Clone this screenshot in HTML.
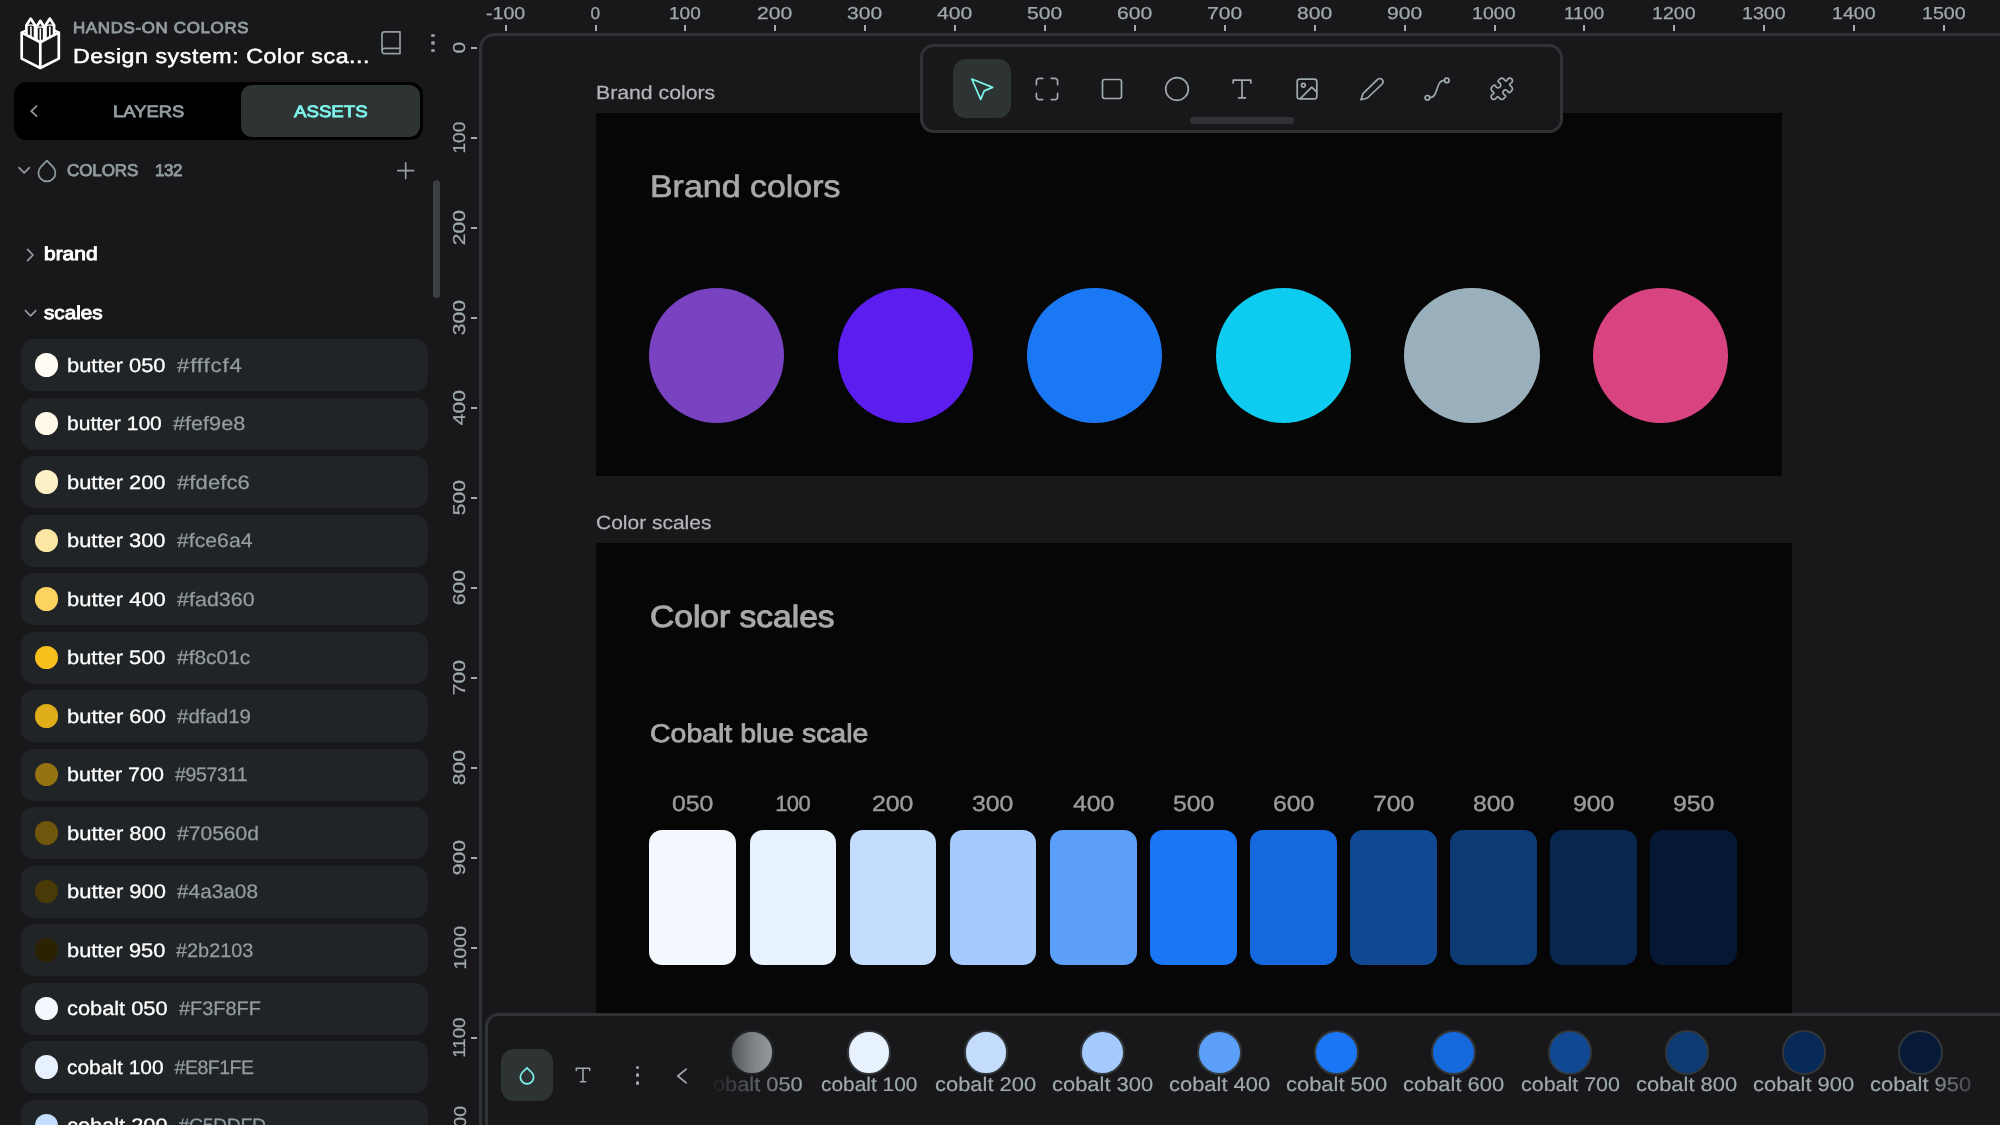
<!DOCTYPE html>
<html><head><meta charset="utf-8"><title>Penpot - Design system: Color scales</title>
<style>
html,body{margin:0;padding:0;}
body{width:2000px;height:1125px;overflow:hidden;background:#18181a;position:relative;font-family:"Liberation Sans",sans-serif;}
#app{position:absolute;left:0;top:0;width:2000px;height:1125px;overflow:hidden;will-change:transform;}
.b{position:absolute;display:block;}
.t{position:absolute;display:block;white-space:nowrap;line-height:1;text-rendering:geometricPrecision;transform-origin:0 50%;font-family:"Liberation Sans",sans-serif;}
</style></head><body><div id="app">
<div class="b" style="left:479.4px;top:33.1px;width:1600px;height:1200px;border:3.5px solid #2f3336;border-radius:15.5px;background:#18181a;"></div>
<div class="b" style="left:595.60px;top:113.20px;width:1186.40px;height:363.30px;background:#060606;"></div>
<div class="b" style="left:595.60px;top:543.00px;width:1196.00px;height:600.00px;background:#060606;"></div>
<span class="t" style="left:595.70px;top:84.42px;font-size:19px;color:#b4b6b9;transform:scaleX(1.1175);-webkit-text-stroke:0.25px #b4b6b9;">Brand colors</span>
<span class="t" style="left:595.70px;top:514.42px;font-size:19px;color:#b4b6b9;transform:scaleX(1.1039);-webkit-text-stroke:0.25px #b4b6b9;">Color scales</span>
<span class="t" style="left:650.30px;top:171.26px;font-size:31.0px;color:#a9a9a9;transform:scaleX(1.0941);-webkit-text-stroke:0.65px #a9a9a9;">Brand colors</span>
<span class="t" style="left:650.30px;top:602.10px;font-size:30.6px;color:#a9a9a9;transform:scaleX(1.0965);-webkit-text-stroke:1.0px #a9a9a9;">Color scales</span>
<span class="t" style="left:650.30px;top:721.73px;font-size:25.6px;color:#a9a9a9;transform:scaleX(1.1121);-webkit-text-stroke:0.8px #a9a9a9;">Cobalt blue scale</span>
<div class="b" style="left:649.30px;top:287.50px;width:135.20px;height:135.20px;background:#7842c0;border-radius:70px;"></div>
<div class="b" style="left:838.06px;top:287.50px;width:135.20px;height:135.20px;background:#5b1eee;border-radius:70px;"></div>
<div class="b" style="left:1026.82px;top:287.50px;width:135.20px;height:135.20px;background:#1b78f5;border-radius:70px;"></div>
<div class="b" style="left:1215.58px;top:287.50px;width:135.20px;height:135.20px;background:#0ecbf0;border-radius:70px;"></div>
<div class="b" style="left:1404.34px;top:287.50px;width:135.20px;height:135.20px;background:#9bb0bd;border-radius:70px;"></div>
<div class="b" style="left:1593.10px;top:287.50px;width:135.20px;height:135.20px;background:#d74480;border-radius:70px;"></div>
<div class="b" style="left:649.40px;top:829.60px;width:86.80px;height:135.00px;background:#F3F8FF;border-radius:13px;"></div>
<span class="t" style="left:672.10px;top:793.18px;font-size:22px;color:#9b9b9b;transform:scaleX(1.1279);-webkit-text-stroke:0.4px #9b9b9b;">050</span>
<div class="b" style="left:749.50px;top:829.60px;width:86.80px;height:135.00px;background:#E8F1FE;border-radius:13px;"></div>
<span class="t" style="left:775.15px;top:793.18px;font-size:22px;color:#9b9b9b;letter-spacing:-0.603px;-webkit-text-stroke:0.4px #9b9b9b;">100</span>
<div class="b" style="left:849.60px;top:829.60px;width:86.80px;height:135.00px;background:#C5DDFD;border-radius:13px;"></div>
<span class="t" style="left:872.30px;top:793.18px;font-size:22px;color:#9b9b9b;transform:scaleX(1.1279);-webkit-text-stroke:0.4px #9b9b9b;">200</span>
<div class="b" style="left:949.70px;top:829.60px;width:86.80px;height:135.00px;background:#A4CAFE;border-radius:13px;"></div>
<span class="t" style="left:972.40px;top:793.18px;font-size:22px;color:#9b9b9b;transform:scaleX(1.1279);-webkit-text-stroke:0.4px #9b9b9b;">300</span>
<div class="b" style="left:1049.80px;top:829.60px;width:86.80px;height:135.00px;background:#5B9FF9;border-radius:13px;"></div>
<span class="t" style="left:1072.50px;top:793.18px;font-size:22px;color:#9b9b9b;transform:scaleX(1.1279);-webkit-text-stroke:0.4px #9b9b9b;">400</span>
<div class="b" style="left:1149.90px;top:829.60px;width:86.80px;height:135.00px;background:#1B76F5;border-radius:13px;"></div>
<span class="t" style="left:1172.60px;top:793.18px;font-size:22px;color:#9b9b9b;transform:scaleX(1.1279);-webkit-text-stroke:0.4px #9b9b9b;">500</span>
<div class="b" style="left:1250.00px;top:829.60px;width:86.80px;height:135.00px;background:#1668DD;border-radius:13px;"></div>
<span class="t" style="left:1272.70px;top:793.18px;font-size:22px;color:#9b9b9b;transform:scaleX(1.1279);-webkit-text-stroke:0.4px #9b9b9b;">600</span>
<div class="b" style="left:1350.10px;top:829.60px;width:86.80px;height:135.00px;background:#114894;border-radius:13px;"></div>
<span class="t" style="left:1372.80px;top:793.18px;font-size:22px;color:#9b9b9b;transform:scaleX(1.1279);-webkit-text-stroke:0.4px #9b9b9b;">700</span>
<div class="b" style="left:1450.20px;top:829.60px;width:86.80px;height:135.00px;background:#0E3A74;border-radius:13px;"></div>
<span class="t" style="left:1472.90px;top:793.18px;font-size:22px;color:#9b9b9b;transform:scaleX(1.1279);-webkit-text-stroke:0.4px #9b9b9b;">800</span>
<div class="b" style="left:1550.30px;top:829.60px;width:86.80px;height:135.00px;background:#08274E;border-radius:13px;"></div>
<span class="t" style="left:1573.00px;top:793.18px;font-size:22px;color:#9b9b9b;transform:scaleX(1.1279);-webkit-text-stroke:0.4px #9b9b9b;">900</span>
<div class="b" style="left:1650.40px;top:829.60px;width:86.80px;height:135.00px;background:#051732;border-radius:13px;"></div>
<span class="t" style="left:1673.10px;top:793.18px;font-size:22px;color:#9b9b9b;transform:scaleX(1.1279);-webkit-text-stroke:0.4px #9b9b9b;">950</span>
<div class="b" style="left:504.60px;top:25.00px;width:2.00px;height:6.40px;background:#a3abaf;"></div>
<span class="t" style="left:485.65px;top:5.46px;font-size:17.3px;color:#a0a9ad;transform:scaleX(1.1350);-webkit-text-stroke:0.25px #a0a9ad;">-100</span>
<div class="b" style="left:594.50px;top:25.00px;width:2.00px;height:6.40px;background:#a3abaf;"></div>
<span class="t" style="left:590.39px;top:5.46px;font-size:17.3px;color:#a0a9ad;-webkit-text-stroke:0.25px #a0a9ad;">0</span>
<div class="b" style="left:684.40px;top:25.00px;width:2.00px;height:6.40px;background:#a3abaf;"></div>
<span class="t" style="left:669.20px;top:5.46px;font-size:17.3px;color:#a0a9ad;transform:scaleX(1.1017);-webkit-text-stroke:0.25px #a0a9ad;">100</span>
<div class="b" style="left:774.30px;top:25.00px;width:2.00px;height:6.40px;background:#a3abaf;"></div>
<span class="t" style="left:757.40px;top:5.46px;font-size:17.3px;color:#a0a9ad;transform:scaleX(1.2195);-webkit-text-stroke:0.25px #a0a9ad;">200</span>
<div class="b" style="left:864.20px;top:25.00px;width:2.00px;height:6.40px;background:#a3abaf;"></div>
<span class="t" style="left:847.30px;top:5.46px;font-size:17.3px;color:#a0a9ad;transform:scaleX(1.2195);-webkit-text-stroke:0.25px #a0a9ad;">300</span>
<div class="b" style="left:954.10px;top:25.00px;width:2.00px;height:6.40px;background:#a3abaf;"></div>
<span class="t" style="left:937.20px;top:5.46px;font-size:17.3px;color:#a0a9ad;transform:scaleX(1.2195);-webkit-text-stroke:0.25px #a0a9ad;">400</span>
<div class="b" style="left:1044.00px;top:25.00px;width:2.00px;height:6.40px;background:#a3abaf;"></div>
<span class="t" style="left:1027.10px;top:5.46px;font-size:17.3px;color:#a0a9ad;transform:scaleX(1.2195);-webkit-text-stroke:0.25px #a0a9ad;">500</span>
<div class="b" style="left:1133.90px;top:25.00px;width:2.00px;height:6.40px;background:#a3abaf;"></div>
<span class="t" style="left:1117.00px;top:5.46px;font-size:17.3px;color:#a0a9ad;transform:scaleX(1.2195);-webkit-text-stroke:0.25px #a0a9ad;">600</span>
<div class="b" style="left:1223.80px;top:25.00px;width:2.00px;height:6.40px;background:#a3abaf;"></div>
<span class="t" style="left:1206.90px;top:5.46px;font-size:17.3px;color:#a0a9ad;transform:scaleX(1.2195);-webkit-text-stroke:0.25px #a0a9ad;">700</span>
<div class="b" style="left:1313.70px;top:25.00px;width:2.00px;height:6.40px;background:#a3abaf;"></div>
<span class="t" style="left:1296.80px;top:5.46px;font-size:17.3px;color:#a0a9ad;transform:scaleX(1.2195);-webkit-text-stroke:0.25px #a0a9ad;">800</span>
<div class="b" style="left:1403.60px;top:25.00px;width:2.00px;height:6.40px;background:#a3abaf;"></div>
<span class="t" style="left:1386.70px;top:5.46px;font-size:17.3px;color:#a0a9ad;transform:scaleX(1.2195);-webkit-text-stroke:0.25px #a0a9ad;">900</span>
<div class="b" style="left:1493.50px;top:25.00px;width:2.00px;height:6.40px;background:#a3abaf;"></div>
<span class="t" style="left:1472.40px;top:5.46px;font-size:17.3px;color:#a0a9ad;transform:scaleX(1.1329);-webkit-text-stroke:0.25px #a0a9ad;">1000</span>
<div class="b" style="left:1583.40px;top:25.00px;width:2.00px;height:6.40px;background:#a3abaf;"></div>
<span class="t" style="left:1564.00px;top:5.46px;font-size:17.3px;color:#a0a9ad;transform:scaleX(1.0806);-webkit-text-stroke:0.25px #a0a9ad;">1100</span>
<div class="b" style="left:1673.30px;top:25.00px;width:2.00px;height:6.40px;background:#a3abaf;"></div>
<span class="t" style="left:1652.20px;top:5.46px;font-size:17.3px;color:#a0a9ad;transform:scaleX(1.1329);-webkit-text-stroke:0.25px #a0a9ad;">1200</span>
<div class="b" style="left:1763.20px;top:25.00px;width:2.00px;height:6.40px;background:#a3abaf;"></div>
<span class="t" style="left:1742.10px;top:5.46px;font-size:17.3px;color:#a0a9ad;transform:scaleX(1.1329);-webkit-text-stroke:0.25px #a0a9ad;">1300</span>
<div class="b" style="left:1853.10px;top:25.00px;width:2.00px;height:6.40px;background:#a3abaf;"></div>
<span class="t" style="left:1832.00px;top:5.46px;font-size:17.3px;color:#a0a9ad;transform:scaleX(1.1329);-webkit-text-stroke:0.25px #a0a9ad;">1400</span>
<div class="b" style="left:1943.00px;top:25.00px;width:2.00px;height:6.40px;background:#a3abaf;"></div>
<span class="t" style="left:1921.90px;top:5.46px;font-size:17.3px;color:#a0a9ad;transform:scaleX(1.1329);-webkit-text-stroke:0.25px #a0a9ad;">1500</span>
<div class="b" style="left:471.10px;top:47.40px;width:6.40px;height:1.90px;background:#a3abaf;"></div>
<span class="t" style="left:455.09px;top:39.05px;width:9.62px;font-size:17.3px;color:#a0a9ad;-webkit-text-stroke:0.25px #a0a9ad;transform:rotate(-90deg) scaleX(1.2056);transform-origin:50% 50%;">0</span>
<div class="b" style="left:471.10px;top:137.40px;width:6.40px;height:1.90px;background:#a3abaf;"></div>
<span class="t" style="left:445.47px;top:129.05px;width:28.86px;font-size:17.3px;color:#a0a9ad;-webkit-text-stroke:0.25px #a0a9ad;transform:rotate(-90deg) scaleX(1.1017);transform-origin:50% 50%;">100</span>
<div class="b" style="left:471.10px;top:227.40px;width:6.40px;height:1.90px;background:#a3abaf;"></div>
<span class="t" style="left:445.47px;top:219.05px;width:28.86px;font-size:17.3px;color:#a0a9ad;-webkit-text-stroke:0.25px #a0a9ad;transform:rotate(-90deg) scaleX(1.2195);transform-origin:50% 50%;">200</span>
<div class="b" style="left:471.10px;top:317.40px;width:6.40px;height:1.90px;background:#a3abaf;"></div>
<span class="t" style="left:445.47px;top:309.05px;width:28.86px;font-size:17.3px;color:#a0a9ad;-webkit-text-stroke:0.25px #a0a9ad;transform:rotate(-90deg) scaleX(1.2195);transform-origin:50% 50%;">300</span>
<div class="b" style="left:471.10px;top:407.40px;width:6.40px;height:1.90px;background:#a3abaf;"></div>
<span class="t" style="left:445.47px;top:399.05px;width:28.86px;font-size:17.3px;color:#a0a9ad;-webkit-text-stroke:0.25px #a0a9ad;transform:rotate(-90deg) scaleX(1.2195);transform-origin:50% 50%;">400</span>
<div class="b" style="left:471.10px;top:497.40px;width:6.40px;height:1.90px;background:#a3abaf;"></div>
<span class="t" style="left:445.47px;top:489.05px;width:28.86px;font-size:17.3px;color:#a0a9ad;-webkit-text-stroke:0.25px #a0a9ad;transform:rotate(-90deg) scaleX(1.2195);transform-origin:50% 50%;">500</span>
<div class="b" style="left:471.10px;top:587.40px;width:6.40px;height:1.90px;background:#a3abaf;"></div>
<span class="t" style="left:445.47px;top:579.05px;width:28.86px;font-size:17.3px;color:#a0a9ad;-webkit-text-stroke:0.25px #a0a9ad;transform:rotate(-90deg) scaleX(1.2195);transform-origin:50% 50%;">600</span>
<div class="b" style="left:471.10px;top:677.40px;width:6.40px;height:1.90px;background:#a3abaf;"></div>
<span class="t" style="left:445.47px;top:669.05px;width:28.86px;font-size:17.3px;color:#a0a9ad;-webkit-text-stroke:0.25px #a0a9ad;transform:rotate(-90deg) scaleX(1.2195);transform-origin:50% 50%;">700</span>
<div class="b" style="left:471.10px;top:767.40px;width:6.40px;height:1.90px;background:#a3abaf;"></div>
<span class="t" style="left:445.47px;top:759.05px;width:28.86px;font-size:17.3px;color:#a0a9ad;-webkit-text-stroke:0.25px #a0a9ad;transform:rotate(-90deg) scaleX(1.2195);transform-origin:50% 50%;">800</span>
<div class="b" style="left:471.10px;top:857.40px;width:6.40px;height:1.90px;background:#a3abaf;"></div>
<span class="t" style="left:445.47px;top:849.05px;width:28.86px;font-size:17.3px;color:#a0a9ad;-webkit-text-stroke:0.25px #a0a9ad;transform:rotate(-90deg) scaleX(1.2195);transform-origin:50% 50%;">900</span>
<div class="b" style="left:471.10px;top:947.40px;width:6.40px;height:1.90px;background:#a3abaf;"></div>
<span class="t" style="left:440.66px;top:939.05px;width:38.49px;font-size:17.3px;color:#a0a9ad;-webkit-text-stroke:0.25px #a0a9ad;transform:rotate(-90deg) scaleX(1.1329);transform-origin:50% 50%;">1000</span>
<div class="b" style="left:471.10px;top:1037.40px;width:6.40px;height:1.90px;background:#a3abaf;"></div>
<span class="t" style="left:441.30px;top:1029.05px;width:37.20px;font-size:17.3px;color:#a0a9ad;-webkit-text-stroke:0.25px #a0a9ad;transform:rotate(-90deg) scaleX(1.0806);transform-origin:50% 50%;">1100</span>
<div class="b" style="left:471.10px;top:1127.40px;width:6.40px;height:1.90px;background:#a3abaf;"></div>
<span class="t" style="left:440.66px;top:1119.05px;width:38.49px;font-size:17.3px;color:#a0a9ad;-webkit-text-stroke:0.25px #a0a9ad;transform:rotate(-90deg) scaleX(1.1329);transform-origin:50% 50%;">1200</span>
<div class="b" style="left:920.4px;top:43.8px;width:642.2px;height:89.4px;box-sizing:border-box;border:3.25px solid #2f3336;border-radius:14px;background:#18181a;"></div>
<div class="b" style="left:952.50px;top:59.00px;width:58.50px;height:58.50px;background:#2e3434;border-radius:13px;"></div>
<div class="b" style="left:1189.80px;top:117.40px;width:104.00px;height:6.50px;background:#2f3336;border-radius:3.25px;"></div>
<svg class="b" style="left:966.75px;top:73.80px;" width="30" height="30" viewBox="-15.0 -15.0 30 30" fill="none" stroke="#7ef5eb" stroke-width="1.7" stroke-linecap="round" stroke-linejoin="round"><path d="M-10.2 -10 L10.6 -1.6 L2.2 1.9 L-1.3 10.4 Z"/></svg>
<svg class="b" style="left:1031.75px;top:73.80px;" width="30" height="30" viewBox="-15.0 -15.0 30 30" fill="none" stroke="#a0a9ad" stroke-width="1.7" stroke-linecap="round" stroke-linejoin="round"><path d="M-10.6 -4.3 V-7.8 a2.8 2.8 0 0 1 2.8-2.8 H-4.3 M4.3 -10.6 H7.8 a2.8 2.8 0 0 1 2.8 2.8 V-4.3 M10.6 4.3 V7.8 a2.8 2.8 0 0 1 -2.8 2.8 H4.3 M-4.3 10.6 H-7.8 a2.8 2.8 0 0 1 -2.8-2.8 V4.3"/></svg>
<svg class="b" style="left:1096.75px;top:73.80px;" width="30" height="30" viewBox="-15.0 -15.0 30 30" fill="none" stroke="#a0a9ad" stroke-width="1.7" stroke-linecap="round" stroke-linejoin="round"><rect x="-9.5" y="-9.5" width="19" height="19" rx="2.2"/></svg>
<svg class="b" style="left:1161.75px;top:73.80px;" width="30" height="30" viewBox="-15.0 -15.0 30 30" fill="none" stroke="#a0a9ad" stroke-width="1.7" stroke-linecap="round" stroke-linejoin="round"><circle cx="0" cy="0" r="11.3"/></svg>
<svg class="b" style="left:1226.75px;top:73.80px;" width="30" height="30" viewBox="-15.0 -15.0 30 30" fill="none" stroke="#a0a9ad" stroke-width="1.7" stroke-linecap="round" stroke-linejoin="round"><path d="M-8.8 -6 V-8.8 H8.8 V-6 M0 -8.8 V8.8 M-3.4 8.8 H3.4"/></svg>
<svg class="b" style="left:1291.75px;top:73.80px;" width="30" height="30" viewBox="-15.0 -15.0 30 30" fill="none" stroke="#a0a9ad" stroke-width="1.7" stroke-linecap="round" stroke-linejoin="round"><rect x="-9.8" y="-9.8" width="19.6" height="19.6" rx="2.4"/><circle cx="-3.6" cy="-3.8" r="1.9"/><path d="M-6.5 9.4 L4.7 -1.9 L9.8 3.2"/></svg>
<svg class="b" style="left:1356.75px;top:73.80px;" width="30" height="30" viewBox="-15.0 -15.0 30 30" fill="none" stroke="#a0a9ad" stroke-width="1.7" stroke-linecap="round" stroke-linejoin="round"><path d="M-11 10.8 L-9 4.6 L5.6 -9.6 a3 3 0 0 1 4.3 0 l0.3 0.3 a3 3 0 0 1 0 4.3 L-4.6 9 Z"/></svg>
<svg class="b" style="left:1421.75px;top:73.80px;" width="30" height="30" viewBox="-15.0 -15.0 30 30" fill="none" stroke="#a0a9ad" stroke-width="1.7" stroke-linecap="round" stroke-linejoin="round"><circle cx="-9.6" cy="8.8" r="2.3"/><circle cx="9.8" cy="-8.6" r="2.3"/><path d="M-7.3 8.6 C2 8.6 -2 -8.6 7.5 -8.6"/></svg>
<svg class="b" style="left:1488.55px;top:76.10px;" width="25.6" height="25.6" viewBox="0 0 24 24" fill="none" stroke="#a0a9ad" stroke-width="1.6" stroke-linecap="round" stroke-linejoin="round"><path d="M19.439 7.85c-.049.322.059.648.289.878l1.568 1.568c.47.47.706 1.087.706 1.704s-.235 1.233-.706 1.704l-1.611 1.611a.98.98 0 0 1-.837.276c-.47-.07-.802-.48-.968-.925a2.501 2.501 0 1 0-3.214 3.214c.446.166.855.497.925.968a.979.979 0 0 1-.276.837l-1.61 1.61a2.404 2.404 0 0 1-1.705.707 2.402 2.402 0 0 1-1.704-.706l-1.568-1.568a1.026 1.026 0 0 0-.877-.29c-.493.074-.84.504-1.02.968a2.5 2.5 0 1 1-3.237-3.237c.464-.18.894-.527.967-1.02a1.026 1.026 0 0 0-.289-.877l-1.568-1.568A2.402 2.402 0 0 1 1.998 12c0-.617.236-1.234.706-1.704L4.23 8.77c.24-.24.581-.353.917-.303.515.077.877.528 1.073 1.01a2.5 2.5 0 1 0 3.259-3.259c-.482-.196-.933-.558-1.01-1.073-.05-.336.062-.676.303-.917l1.525-1.525A2.402 2.402 0 0 1 12 1.998c.617 0 1.234.236 1.704.706l1.568 1.568c.23.23.556.338.877.29.493-.074.84-.504 1.02-.968a2.5 2.5 0 1 1 3.237 3.237c-.464.18-.894.527-.967 1.02Z"/></svg>
<div class="b" style="left:485px;top:1013.4px;width:1600px;height:200px;box-sizing:border-box;border:3.25px solid #2f3336;border-radius:14px;background:#18181a;"></div>
<div class="b" style="left:501.40px;top:1049.00px;width:52.00px;height:52.00px;background:#2e3434;border-radius:13px;"></div>
<svg class="b" style="left:512.30px;top:1060.70px;" width="30" height="30" viewBox="-15.0 -15.0 30 30" fill="none" stroke="#7ef5eb" stroke-width="1.7" stroke-linecap="round" stroke-linejoin="round"><path d="M0 -8.2 L4.7 -3.5 A6.65 6.65 0 1 1 -4.7 -3.5 Z"/></svg>
<svg class="b" style="left:567.50px;top:1060.00px;" width="30" height="30" viewBox="-15.0 -15.0 30 30" fill="none" stroke="#a0a9ad" stroke-width="1.55" stroke-linecap="round" stroke-linejoin="round"><path d="M-6.7 -4.6 V-6.7 H6.7 V-4.6 M0 -6.7 V6.7 M-2.6 6.7 H2.6"/></svg>
<div class="b" style="left:635.60px;top:1065.50px;width:3.80px;height:3.80px;background:#a0a9ad;border-radius:2px;"></div>
<div class="b" style="left:635.60px;top:1073.10px;width:3.80px;height:3.80px;background:#a0a9ad;border-radius:2px;"></div>
<div class="b" style="left:635.60px;top:1080.80px;width:3.80px;height:3.80px;background:#a0a9ad;border-radius:2px;"></div>
<svg class="b" style="left:666.80px;top:1060.60px;" width="30" height="30" viewBox="-15.0 -15.0 30 30" fill="none" stroke="#a0a9ad" stroke-width="1.7" stroke-linecap="round" stroke-linejoin="round"><path d="M4.2 -6.8 L-4.2 0 L4.2 6.8"/></svg>
<div class="b" style="left:729.90px;top:1030.00px;width:44.60px;height:44.60px;background:#F3F8FF;border-radius:23px;box-sizing:border-box;border:2.9px solid #32373a;background:linear-gradient(90deg,#55585b 0%,#808387 55%,#94989b 100%);border-color:#222628;"></div>
<span class="t" style="left:701.80px;top:1076.24px;font-size:19.8px;color:#9fa8ad;transform:scaleX(1.1032);-webkit-text-stroke:0.2px #9fa8ad;-webkit-mask-image:linear-gradient(90deg,transparent 6%,#000 100%);mask-image:linear-gradient(90deg,transparent 6%,#000 100%);">cobalt 050</span>
<div class="b" style="left:846.75px;top:1030.00px;width:44.60px;height:44.60px;background:#E8F1FE;border-radius:23px;box-sizing:border-box;border:2.9px solid #32373a;"></div>
<span class="t" style="left:820.80px;top:1076.24px;font-size:19.8px;color:#9fa8ad;transform:scaleX(1.0561);-webkit-text-stroke:0.2px #9fa8ad;">cobalt 100</span>
<div class="b" style="left:963.60px;top:1030.00px;width:44.60px;height:44.60px;background:#C5DDFD;border-radius:23px;box-sizing:border-box;border:2.9px solid #32373a;"></div>
<span class="t" style="left:935.30px;top:1076.24px;font-size:19.8px;color:#9fa8ad;transform:scaleX(1.1076);-webkit-text-stroke:0.2px #9fa8ad;">cobalt 200</span>
<div class="b" style="left:1080.45px;top:1030.00px;width:44.60px;height:44.60px;background:#A4CAFE;border-radius:23px;box-sizing:border-box;border:2.9px solid #32373a;"></div>
<span class="t" style="left:1052.15px;top:1076.24px;font-size:19.8px;color:#9fa8ad;transform:scaleX(1.1076);-webkit-text-stroke:0.2px #9fa8ad;">cobalt 300</span>
<div class="b" style="left:1197.30px;top:1030.00px;width:44.60px;height:44.60px;background:#5B9FF9;border-radius:23px;box-sizing:border-box;border:2.9px solid #32373a;"></div>
<span class="t" style="left:1169.00px;top:1076.24px;font-size:19.8px;color:#9fa8ad;transform:scaleX(1.1076);-webkit-text-stroke:0.2px #9fa8ad;">cobalt 400</span>
<div class="b" style="left:1314.15px;top:1030.00px;width:44.60px;height:44.60px;background:#1B76F5;border-radius:23px;box-sizing:border-box;border:2.9px solid #32373a;"></div>
<span class="t" style="left:1285.85px;top:1076.24px;font-size:19.8px;color:#9fa8ad;transform:scaleX(1.1076);-webkit-text-stroke:0.2px #9fa8ad;">cobalt 500</span>
<div class="b" style="left:1431.00px;top:1030.00px;width:44.60px;height:44.60px;background:#1668DD;border-radius:23px;box-sizing:border-box;border:2.9px solid #32373a;"></div>
<span class="t" style="left:1402.70px;top:1076.24px;font-size:19.8px;color:#9fa8ad;transform:scaleX(1.1076);-webkit-text-stroke:0.2px #9fa8ad;">cobalt 600</span>
<div class="b" style="left:1547.85px;top:1030.00px;width:44.60px;height:44.60px;background:#114894;border-radius:23px;box-sizing:border-box;border:2.9px solid #32373a;"></div>
<span class="t" style="left:1520.65px;top:1076.24px;font-size:19.8px;color:#9fa8ad;transform:scaleX(1.0835);-webkit-text-stroke:0.2px #9fa8ad;">cobalt 700</span>
<div class="b" style="left:1664.70px;top:1030.00px;width:44.60px;height:44.60px;background:#0E3A74;border-radius:23px;box-sizing:border-box;border:2.9px solid #32373a;"></div>
<span class="t" style="left:1636.40px;top:1076.24px;font-size:19.8px;color:#9fa8ad;transform:scaleX(1.1076);-webkit-text-stroke:0.2px #9fa8ad;">cobalt 800</span>
<div class="b" style="left:1781.55px;top:1030.00px;width:44.60px;height:44.60px;background:#082a58;border-radius:23px;box-sizing:border-box;border:2.9px solid #32373a;"></div>
<span class="t" style="left:1753.25px;top:1076.24px;font-size:19.8px;color:#9fa8ad;transform:scaleX(1.1076);-webkit-text-stroke:0.2px #9fa8ad;">cobalt 900</span>
<div class="b" style="left:1898.40px;top:1030.00px;width:44.60px;height:44.60px;background:#061a38;border-radius:23px;box-sizing:border-box;border:2.9px solid #32373a;"></div>
<span class="t" style="left:1870.10px;top:1076.24px;font-size:19.8px;color:#9fa8ad;transform:scaleX(1.1076);-webkit-text-stroke:0.2px #9fa8ad;-webkit-mask-image:linear-gradient(90deg,#000 55%,rgba(0,0,0,0.3) 100%);mask-image:linear-gradient(90deg,#000 55%,rgba(0,0,0,0.3) 100%);">cobalt 950</span>
<div class="b" style="left:0.00px;top:0.00px;width:447.00px;height:1125.00px;background:#18181a;"></div>
<svg class="b" style="left:14px;top:10px;" width="56" height="66" viewBox="14 10 56 66" fill="none" stroke="#fff" stroke-width="2.7" stroke-linejoin="round" stroke-linecap="butt">
<path d="M21.7 32.6 V58.6 L40.3 68 L58.8 58.6 V32.6 L40.3 42.2 Z M40.3 42.2 V68"/>
<path d="M21.7 32.6 L26.4 30.2 M58.8 32.6 L54.1 30.2" stroke-width="2.2"/>
<path d="M26.4 35 V25.2 L30.6 18.6 L35.1 25.2 V39.4"/>
<path d="M36.4 40 V27.2 L40.3 20.8 L44.2 27.2 V40"/>
<path d="M45.5 39.4 V25.2 L49.9 18.6 L54.1 25.2 V35"/>
<path d="M30.9 26.4 V37 M40.3 28.4 V41.4 M49.8 26.4 V37" stroke-width="1.6"/>
<path d="M27.6 25.8 Q30.7 23.8 34 25.8 M37.5 27.8 Q40.3 26 43.1 27.8 M46.7 25.8 Q49.9 23.8 52.9 25.8" stroke-width="1.3"/>
</svg>
<span class="t" style="left:72.80px;top:20.53px;font-size:15.8px;color:#929ca1;letter-spacing:0.623px;transform:scaleX(1.0700);-webkit-text-stroke:0.85px #929ca1;">HANDS-ON COLORS</span>
<span class="t" style="left:73.00px;top:46.95px;font-size:20.5px;color:#fff;letter-spacing:0.496px;transform:scaleX(1.1300);-webkit-text-stroke:0.5px #fff;">Design system: Color sca...</span>
<svg class="b" style="left:378px;top:28px;" width="26" height="30" viewBox="378 28 26 30" fill="none" stroke="#929ca1" stroke-width="1.7" stroke-linejoin="round" stroke-linecap="round"><path d="M382 51 V34.2 a2.4 2.4 0 0 1 2.4 -2.4 H400 V53.6 H384.6 a2.6 2.6 0 0 1 0 -5.2 H400"/></svg>
<div class="b" style="left:431.40px;top:33.80px;width:3.60px;height:3.60px;background:#929ca1;border-radius:2px;"></div>
<div class="b" style="left:431.40px;top:41.30px;width:3.60px;height:3.60px;background:#929ca1;border-radius:2px;"></div>
<div class="b" style="left:431.40px;top:48.80px;width:3.60px;height:3.60px;background:#929ca1;border-radius:2px;"></div>
<div class="b" style="left:14.40px;top:82.00px;width:408.20px;height:58.00px;background:#000;border-radius:13px;"></div>
<div class="b" style="left:240.80px;top:85.00px;width:179.40px;height:52.00px;background:#2e3434;border-radius:11px;"></div>
<svg class="b" style="left:26px;top:103px;" width="16" height="16" viewBox="26 103 16 16" fill="none" stroke="#929ca1" stroke-width="1.7" stroke-linejoin="round" stroke-linecap="round"><path d="M36.6 106.2 L31.2 111.2 L36.6 116.2"/></svg>
<span class="t" style="left:113.00px;top:104.33px;font-size:16.5px;color:#929ca1;transform:scaleX(1.1160);-webkit-text-stroke:0.8px #929ca1;">LAYERS</span>
<span class="t" style="left:293.80px;top:104.33px;font-size:16.5px;color:#7ef5eb;transform:scaleX(1.1320);-webkit-text-stroke:0.8px #7ef5eb;">ASSETS</span>
<svg class="b" style="left:14px;top:156px;" width="48" height="30" viewBox="14 156 48 30" fill="none" stroke="#929ca1" stroke-width="1.7" stroke-linejoin="round" stroke-linecap="round"><path d="M19 167.6 L24.2 172.8 L29.4 167.6"/><path d="M46.9 160.6 L52.9 166.9 A8.5 8.5 0 1 1 40.9 166.9 Z"/></svg>
<span class="t" style="left:67.00px;top:161.91px;font-size:17px;color:#929ca1;letter-spacing:-0.099px;-webkit-text-stroke:0.8px #929ca1;">COLORS</span>
<span class="t" style="left:155.00px;top:161.91px;font-size:17px;color:#929ca1;letter-spacing:-0.432px;-webkit-text-stroke:0.8px #929ca1;">132</span>
<svg class="b" style="left:395px;top:160px;" width="22" height="22" viewBox="395 160 22 22" fill="none" stroke="#929ca1" stroke-width="1.7" stroke-linecap="round"><path d="M397.8 170.7 H413.6 M405.7 162.8 V178.6"/></svg>
<div class="b" style="left:432.80px;top:179.50px;width:7.40px;height:118.00px;background:#3a3f43;border-radius:3.7px;"></div>
<svg class="b" style="left:22px;top:244px;" width="18" height="80" viewBox="22 244 18 80" fill="none" stroke="#929ca1" stroke-width="1.7" stroke-linejoin="round" stroke-linecap="round"><path d="M27.6 249.4 L33 255 L27.6 260.6"/><path d="M25.4 310.6 L30.6 315.8 L35.8 310.6"/></svg>
<span class="t" style="left:44.40px;top:245.39px;font-size:18.8px;color:#fff;transform:scaleX(1.1147);-webkit-text-stroke:0.95px #fff;">brand</span>
<span class="t" style="left:44.40px;top:303.99px;font-size:18.8px;color:#fff;transform:scaleX(1.0997);-webkit-text-stroke:0.95px #fff;">scales</span>
<div class="b" style="left:20.60px;top:339.20px;width:407.40px;height:52.00px;background:#212426;border-radius:13px;"></div>
<div class="b" style="left:34.90px;top:353.40px;width:23.60px;height:23.60px;background:#fffcf4;border-radius:12px;"></div>
<span class="t" style="left:67.00px;top:356.59px;font-size:19.5px;color:#fff;transform:scaleX(1.1217);-webkit-text-stroke:0.3px #fff;">butter 050</span>
<span class="t" style="left:176.50px;top:356.59px;font-size:19.5px;color:#929ca1;letter-spacing:0.823px;transform:scaleX(1.1300);-webkit-text-stroke:0.25px #929ca1;">#fffcf4</span>
<div class="b" style="left:20.60px;top:397.70px;width:407.40px;height:52.00px;background:#212426;border-radius:13px;"></div>
<div class="b" style="left:34.90px;top:411.90px;width:23.60px;height:23.60px;background:#fef9e8;border-radius:12px;"></div>
<span class="t" style="left:67.00px;top:415.09px;font-size:19.5px;color:#fff;transform:scaleX(1.0795);-webkit-text-stroke:0.3px #fff;">butter 100</span>
<span class="t" style="left:172.80px;top:415.09px;font-size:19.5px;color:#929ca1;transform:scaleX(1.1097);-webkit-text-stroke:0.25px #929ca1;">#fef9e8</span>
<div class="b" style="left:20.60px;top:456.20px;width:407.40px;height:52.00px;background:#212426;border-radius:13px;"></div>
<div class="b" style="left:34.90px;top:470.40px;width:23.60px;height:23.60px;background:#fdefc6;border-radius:12px;"></div>
<span class="t" style="left:67.00px;top:473.59px;font-size:19.5px;color:#fff;transform:scaleX(1.1217);-webkit-text-stroke:0.3px #fff;">butter 200</span>
<span class="t" style="left:176.50px;top:473.59px;font-size:19.5px;color:#929ca1;letter-spacing:0.077px;transform:scaleX(1.1300);-webkit-text-stroke:0.25px #929ca1;">#fdefc6</span>
<div class="b" style="left:20.60px;top:514.70px;width:407.40px;height:52.00px;background:#212426;border-radius:13px;"></div>
<div class="b" style="left:34.90px;top:528.90px;width:23.60px;height:23.60px;background:#fce6a4;border-radius:12px;"></div>
<span class="t" style="left:67.00px;top:532.09px;font-size:19.5px;color:#fff;transform:scaleX(1.1217);-webkit-text-stroke:0.3px #fff;">butter 300</span>
<span class="t" style="left:176.50px;top:532.09px;font-size:19.5px;color:#929ca1;transform:scaleX(1.0880);-webkit-text-stroke:0.25px #929ca1;">#fce6a4</span>
<div class="b" style="left:20.60px;top:573.20px;width:407.40px;height:52.00px;background:#212426;border-radius:13px;"></div>
<div class="b" style="left:34.90px;top:587.40px;width:23.60px;height:23.60px;background:#fad360;border-radius:12px;"></div>
<span class="t" style="left:67.00px;top:590.59px;font-size:19.5px;color:#fff;transform:scaleX(1.1251);-webkit-text-stroke:0.3px #fff;">butter 400</span>
<span class="t" style="left:176.80px;top:590.59px;font-size:19.5px;color:#929ca1;transform:scaleX(1.1023);-webkit-text-stroke:0.25px #929ca1;">#fad360</span>
<div class="b" style="left:20.60px;top:631.70px;width:407.40px;height:52.00px;background:#212426;border-radius:13px;"></div>
<div class="b" style="left:34.90px;top:645.90px;width:23.60px;height:23.60px;background:#f8c01c;border-radius:12px;"></div>
<span class="t" style="left:67.00px;top:649.09px;font-size:19.5px;color:#fff;transform:scaleX(1.1217);-webkit-text-stroke:0.3px #fff;">butter 500</span>
<span class="t" style="left:176.50px;top:649.09px;font-size:19.5px;color:#929ca1;transform:scaleX(1.0732);-webkit-text-stroke:0.25px #929ca1;">#f8c01c</span>
<div class="b" style="left:20.60px;top:690.20px;width:407.40px;height:52.00px;background:#212426;border-radius:13px;"></div>
<div class="b" style="left:34.90px;top:704.40px;width:23.60px;height:23.60px;background:#dfad19;border-radius:12px;"></div>
<span class="t" style="left:67.00px;top:707.59px;font-size:19.5px;color:#fff;transform:scaleX(1.1273);-webkit-text-stroke:0.3px #fff;">butter 600</span>
<span class="t" style="left:177.00px;top:707.59px;font-size:19.5px;color:#929ca1;transform:scaleX(1.0498);-webkit-text-stroke:0.25px #929ca1;">#dfad19</span>
<div class="b" style="left:20.60px;top:748.70px;width:407.40px;height:52.00px;background:#212426;border-radius:13px;"></div>
<div class="b" style="left:34.90px;top:762.90px;width:23.60px;height:23.60px;background:#957311;border-radius:12px;"></div>
<span class="t" style="left:67.00px;top:766.09px;font-size:19.5px;color:#fff;transform:scaleX(1.1046);-webkit-text-stroke:0.3px #fff;">butter 700</span>
<span class="t" style="left:175.00px;top:766.09px;font-size:19.5px;color:#929ca1;letter-spacing:-0.328px;-webkit-text-stroke:0.25px #929ca1;">#957311</span>
<div class="b" style="left:20.60px;top:807.20px;width:407.40px;height:52.00px;background:#212426;border-radius:13px;"></div>
<div class="b" style="left:34.90px;top:821.40px;width:23.60px;height:23.60px;background:#70560d;border-radius:12px;"></div>
<span class="t" style="left:67.00px;top:824.59px;font-size:19.5px;color:#fff;transform:scaleX(1.1273);-webkit-text-stroke:0.3px #fff;">butter 800</span>
<span class="t" style="left:177.00px;top:824.59px;font-size:19.5px;color:#929ca1;transform:scaleX(1.0802);-webkit-text-stroke:0.25px #929ca1;">#70560d</span>
<div class="b" style="left:20.60px;top:865.70px;width:407.40px;height:52.00px;background:#212426;border-radius:13px;"></div>
<div class="b" style="left:34.90px;top:879.90px;width:23.60px;height:23.60px;background:#4a3a08;border-radius:12px;"></div>
<span class="t" style="left:67.00px;top:883.09px;font-size:19.5px;color:#fff;transform:scaleX(1.1273);-webkit-text-stroke:0.3px #fff;">butter 900</span>
<span class="t" style="left:177.00px;top:883.09px;font-size:19.5px;color:#929ca1;transform:scaleX(1.0670);-webkit-text-stroke:0.25px #929ca1;">#4a3a08</span>
<div class="b" style="left:20.60px;top:924.20px;width:407.40px;height:52.00px;background:#212426;border-radius:13px;"></div>
<div class="b" style="left:34.90px;top:938.40px;width:23.60px;height:23.60px;background:#2b2103;border-radius:12px;"></div>
<span class="t" style="left:67.00px;top:941.59px;font-size:19.5px;color:#fff;transform:scaleX(1.1194);-webkit-text-stroke:0.3px #fff;">butter 950</span>
<span class="t" style="left:176.30px;top:941.59px;font-size:19.5px;color:#929ca1;transform:scaleX(1.0182);-webkit-text-stroke:0.25px #929ca1;">#2b2103</span>
<div class="b" style="left:20.60px;top:982.70px;width:407.40px;height:52.00px;background:#212426;border-radius:13px;"></div>
<div class="b" style="left:34.90px;top:996.90px;width:23.60px;height:23.60px;background:#F3F8FF;border-radius:12px;"></div>
<span class="t" style="left:67.00px;top:1000.09px;font-size:19.5px;color:#fff;transform:scaleX(1.1179);-webkit-text-stroke:0.3px #fff;">cobalt 050</span>
<span class="t" style="left:178.60px;top:1000.09px;font-size:19.5px;color:#929ca1;transform:scaleX(1.0214);-webkit-text-stroke:0.25px #929ca1;">#F3F8FF</span>
<div class="b" style="left:20.60px;top:1041.20px;width:407.40px;height:52.00px;background:#212426;border-radius:13px;"></div>
<div class="b" style="left:34.90px;top:1055.40px;width:23.60px;height:23.60px;background:#E8F1FE;border-radius:12px;"></div>
<span class="t" style="left:67.00px;top:1058.59px;font-size:19.5px;color:#fff;transform:scaleX(1.0735);-webkit-text-stroke:0.3px #fff;">cobalt 100</span>
<span class="t" style="left:174.60px;top:1058.59px;font-size:19.5px;color:#929ca1;letter-spacing:-0.495px;-webkit-text-stroke:0.25px #929ca1;">#E8F1FE</span>
<div class="b" style="left:20.60px;top:1099.70px;width:407.40px;height:52.00px;background:#212426;border-radius:13px;"></div>
<div class="b" style="left:34.90px;top:1113.90px;width:23.60px;height:23.60px;background:#C5DDFD;border-radius:12px;"></div>
<span class="t" style="left:67.00px;top:1117.09px;font-size:19.5px;color:#fff;transform:scaleX(1.1179);-webkit-text-stroke:0.3px #fff;">cobalt 200</span>
<span class="t" style="left:178.60px;top:1117.09px;font-size:19.5px;color:#929ca1;letter-spacing:-0.422px;-webkit-text-stroke:0.25px #929ca1;">#C5DDFD</span>
</div></body></html>
